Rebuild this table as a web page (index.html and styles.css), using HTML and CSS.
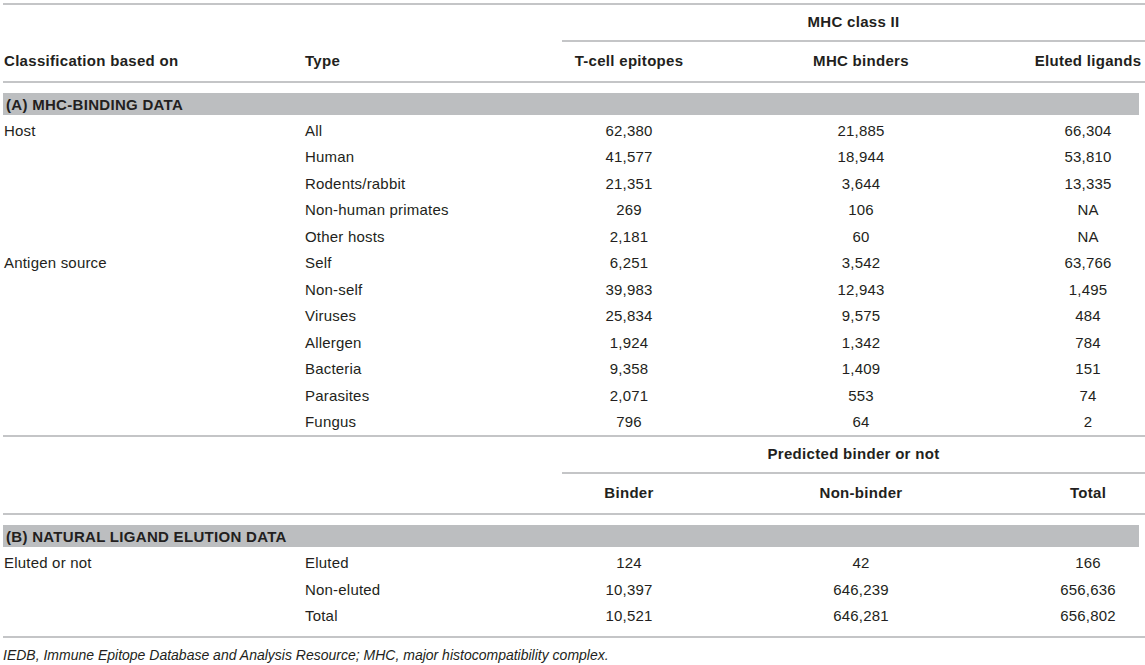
FILE: index.html
```html
<!DOCTYPE html>
<html lang="en">
<head>
    <meta charset="UTF-8">
    <meta name="viewport" content="width=device-width, initial-scale=1.0">
    <title>MHC class II data</title>
    <link rel="stylesheet" href="styles.css">
</head>
<body>
    <!-- Table: MHC class II data sets -->
    <table class="data-table">
        <colgroup>
            <col class="c-class">
            <col class="c-type">
            <col class="c-num1">
            <col class="c-num2">
            <col class="c-num3">
        </colgroup>

        <!-- (A) header -->
        <tr class="group-head">
            <td></td>
            <td></td>
            <th colspan="3" class="span-cell">MHC class II</th>
        </tr>
        <tr class="col-head">
            <th class="first">Classification based on</th>
            <th class="txt">Type</th>
            <th>T-cell epitopes</th>
            <th>MHC binders</th>
            <th class="last">Eluted ligands</th>
        </tr>
        <tr class="section">
            <td colspan="5"><div class="bar">(A) MHC-BINDING DATA</div></td>
        </tr>
        <tr class="row">
            <td class="first">Host</td><td class="txt">All</td>
            <td>62,380</td><td>21,885</td><td class="last">66,304</td>
        </tr>
        <tr class="row">
            <td class="first"></td><td class="txt">Human</td>
            <td>41,577</td><td>18,944</td><td class="last">53,810</td>
        </tr>
        <tr class="row">
            <td class="first"></td><td class="txt">Rodents/rabbit</td>
            <td>21,351</td><td>3,644</td><td class="last">13,335</td>
        </tr>
        <tr class="row">
            <td class="first"></td><td class="txt">Non-human primates</td>
            <td>269</td><td>106</td><td class="last">NA</td>
        </tr>
        <tr class="row">
            <td class="first"></td><td class="txt">Other hosts</td>
            <td>2,181</td><td>60</td><td class="last">NA</td>
        </tr>
        <tr class="row">
            <td class="first">Antigen source</td><td class="txt">Self</td>
            <td>6,251</td><td>3,542</td><td class="last">63,766</td>
        </tr>
        <tr class="row">
            <td class="first"></td><td class="txt">Non-self</td>
            <td>39,983</td><td>12,943</td><td class="last">1,495</td>
        </tr>
        <tr class="row">
            <td class="first"></td><td class="txt">Viruses</td>
            <td>25,834</td><td>9,575</td><td class="last">484</td>
        </tr>
        <tr class="row">
            <td class="first"></td><td class="txt">Allergen</td>
            <td>1,924</td><td>1,342</td><td class="last">784</td>
        </tr>
        <tr class="row">
            <td class="first"></td><td class="txt">Bacteria</td>
            <td>9,358</td><td>1,409</td><td class="last">151</td>
        </tr>
        <tr class="row">
            <td class="first"></td><td class="txt">Parasites</td>
            <td>2,071</td><td>553</td><td class="last">74</td>
        </tr>
        <tr class="row end-a">
            <td class="first"></td><td class="txt">Fungus</td>
            <td>796</td><td>64</td><td class="last">2</td>
        </tr>

        <!-- (B) header -->
        <tr class="group-head">
            <td></td>
            <td></td>
            <th colspan="3" class="span-cell">Predicted binder or not</th>
        </tr>
        <tr class="col-head">
            <th class="first"></th>
            <th class="txt"></th>
            <th>Binder</th>
            <th>Non-binder</th>
            <th class="last">Total</th>
        </tr>
        <tr class="section">
            <td colspan="5"><div class="bar">(B) NATURAL LIGAND ELUTION DATA</div></td>
        </tr>
        <tr class="row">
            <td class="first">Eluted or not</td><td class="txt">Eluted</td>
            <td>124</td><td>42</td><td class="last">166</td>
        </tr>
        <tr class="row">
            <td class="first"></td><td class="txt">Non-eluted</td>
            <td>10,397</td><td>646,239</td><td class="last">656,636</td>
        </tr>
        <tr class="row end-b">
            <td class="first"></td><td class="txt">Total</td>
            <td>10,521</td><td>646,281</td><td class="last">656,802</td>
        </tr>
    </table>

    <p class="note">IEDB, Immune Epitope Database and Analysis Resource; MHC, major histocompatibility complex.</p>
</body>
</html>
```

FILE: styles.css
```css
body {
    margin: 0;
    font-family: "Liberation Sans", Arial, sans-serif;
    font-size: 15px;
    color: #231f20;
    background: #fff;
}
.data-table {
    border-collapse: separate;
    border-spacing: 0;
    table-layout: fixed;
    width: 1142px;
    margin: 3px 0 0 3px;
    border-top: 2px solid #c4c5c7;
    letter-spacing: 0.2px;
}
.c-class { width: 302px; }
.c-type { width: 257px; }
.c-num1 { width: 134px; }
.c-num2 { width: 330px; }
.c-num3 { width: 119px; }

th, td {
    padding: 0;
    text-align: center;
    vertical-align: middle;
    white-space: nowrap;
    line-height: 17px;
}
th {
    font-weight: bold;
    letter-spacing: 0.3px;
}
.first {
    text-align: left;
    padding-left: 1px;
}
.txt {
    text-align: left;
}
.last {
    padding-left: 5px;
}

/* spanning header: "MHC class II" / "Predicted binder or not" */
.group-head th {
    padding: 8px 0 10px;
}
.span-cell {
    border-bottom: 2px solid #c4c5c7;
}
.col-head th {
    padding-top: 10px;
    padding-bottom: 12px;
    border-bottom: 2px solid #c4c5c7;
}
.col-head th.last {
    padding-left: 5px;
}

/* grey section bars */
.section td {
    text-align: left;
}
.bar {
    margin: 10px 6px 3px 0;
    height: 22px;
    line-height: 23px;
    padding-left: 3px;
    background: #bcbec0;
    font-weight: bold;
    letter-spacing: 0.3px;
}

.row td {
    line-height: 26.45px;
}
.end-a td {
    border-bottom: 2px solid #c4c5c7;
}
.end-b td {
    padding-bottom: 6px;
    border-bottom: 2px solid #c4c5c7;
}
.end-b td.last {
    padding-left: 5px;
}
.note {
    margin: 9px 0 0 3px;
    font-size: 14px;
    line-height: 17px;
    font-style: italic;
}
```
